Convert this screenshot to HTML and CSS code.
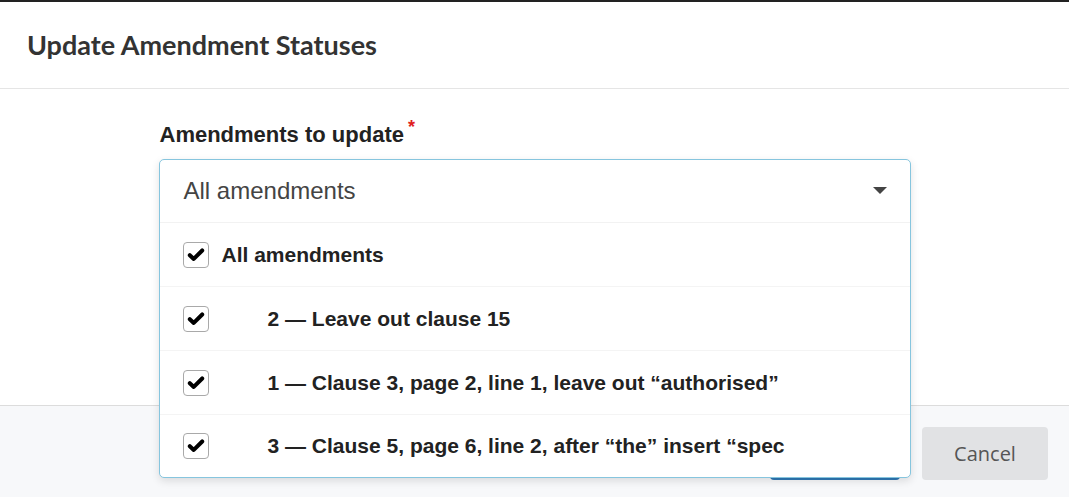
FILE: index.html
```html
<!doctype html>
<html>

<head>
    <title>Update Amendment Statuses</title>
    <link rel="stylesheet" href="styles.css">
</head>

<body>
    <div class="topBar"></div>

    <div class="modal">
        <div class="modalHeader">
            <h1>Update Amendment Statuses</h1>
        </div>

        <div class="modalBody">
            <div class="formGroup">
                <label class="fieldLabel">Amendments to update<span class="required">*</span></label>
                <div class="selectWrap">
                    <div class="select">
                        <div class="selectHead">
                            <span>All amendments</span>
                            <span class="caret"></span>
                        </div>
                        <ul class="options">
                            <li class="option">
                                <span class="checkbox"><svg viewBox="0 0 16 16"><path d="M2.5 8.2 L6 11.5 L13.5 4" /></svg></span>
                                <span class="optionText">All amendments</span>
                            </li>
                            <li class="option child">
                                <span class="checkbox"><svg viewBox="0 0 16 16"><path d="M2.5 8.2 L6 11.5 L13.5 4" /></svg></span>
                                <span class="optionText">2 — Leave out clause 15</span>
                            </li>
                            <li class="option child">
                                <span class="checkbox"><svg viewBox="0 0 16 16"><path d="M2.5 8.2 L6 11.5 L13.5 4" /></svg></span>
                                <span class="optionText">1 — Clause 3, page 2, line 1, leave out “authorised”</span>
                            </li>
                            <li class="option child">
                                <span class="checkbox"><svg viewBox="0 0 16 16"><path d="M2.5 8.2 L6 11.5 L13.5 4" /></svg></span>
                                <span class="optionText">3 — Clause 5, page 6, line 2, after “the” insert “spec</span>
                            </li>
                        </ul>
                    </div>
                </div>
            </div>
        </div>

        <div class="modalFooter">
            <button class="btn btnPrimary">Update</button>
            <button class="btn btnDefault">Cancel</button>
        </div>
    </div>
</body>

</html>
```

FILE: styles.css
```css
* {
    margin: 0;
    padding: 0;
    box-sizing: border-box;
}

body {
    font-family: "Liberation Sans", Arial, sans-serif;
    background-color: #ffffff;
    color: #222;
    overflow: hidden;
}

.topBar {
    height: 2px;
    background-color: #222;
}

.modalHeader {
    height: 87px;
    border-bottom: solid 1px #e5e5e5;
    display: flex;
    align-items: center;
    padding-left: 27px;
}

.modalHeader h1 {
    font-family: Lato, sans-serif;
    font-size: 27px;
    font-weight: 700;
    color: #333;
    margin-top: -2px;
}

.modalBody {
    height: 316px;
    padding-top: 33px;
    display: flex;
    justify-content: center;
}

.formGroup {
    width: 752px;
}

.fieldLabel {
    display: block;
    font-size: 22px;
    font-weight: bold;
    color: #222;
    line-height: 26px;
    padding-left: 1px;
    margin-bottom: 10px;
}

.required {
    color: #e02020;
    font-size: 18px;
    margin-left: 4px;
    position: relative;
    top: -9px;
}

.selectWrap {
    position: relative;
    height: 63px;
}

.select {
    position: absolute;
    top: 0;
    left: 0;
    right: 0;
    z-index: 10;
    background-color: #fff;
    border: solid 1px #86c5de;
    border-radius: 5px;
    box-shadow: 0 3px 8px rgba(0, 0, 0, 0.12);
    overflow: hidden;
}

.selectHead {
    height: 63px;
    display: flex;
    align-items: center;
    justify-content: space-between;
    padding-left: 24px;
    padding-right: 23px;
    font-size: 24px;
    color: #444;
    border-bottom: solid 1px #f2f2f2;
}

.caret {
    width: 0;
    height: 0;
    border-left: 7px solid transparent;
    border-right: 7px solid transparent;
    border-top: 7px solid #444;
    margin-top: -2px;
}

.options {
    list-style: none;
}

.option {
    height: 64px;
    display: flex;
    align-items: center;
    padding-left: 23px;
    border-bottom: solid 1px #f4f4f4;
    font-size: 21px;
    font-weight: bold;
    color: #222;
    white-space: nowrap;
}

.option:last-child {
    height: 62px;
    border-bottom: none;
}

.checkbox {
    width: 26px;
    height: 26px;
    border: solid 1px #a9a9a9;
    border-radius: 4px;
    display: flex;
    align-items: center;
    justify-content: center;
    flex-shrink: 0;
    margin-right: 13px;
}

.checkbox svg {
    width: 18px;
    height: 18px;
    fill: none;
    stroke: #000;
    stroke-width: 3.6;
    stroke-linecap: round;
    stroke-linejoin: round;
}

.child .checkbox {
    margin-right: 59px;
}

.modalFooter {
    height: 92px;
    border-top: solid 1px #dcdcdc;
    background-color: #f7f8fa;
    display: flex;
    justify-content: flex-end;
    align-items: flex-start;
    padding-top: 21px;
    padding-right: 21px;
    gap: 22px;
}

.btn {
    height: 53px;
    border: none;
    border-radius: 4px;
    font-family: "Open Sans", sans-serif;
    font-size: 20px;
}

.btnPrimary {
    width: 130px;
    background-color: #2f78b5;
    color: #fff;
}

.btnDefault {
    width: 126px;
    background-color: #e1e2e4;
    color: #555;
}
```
